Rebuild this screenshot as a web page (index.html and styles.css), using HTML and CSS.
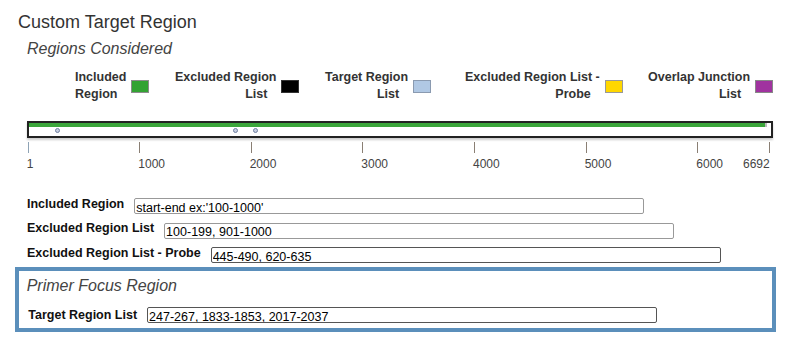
FILE: index.html
```html
<!DOCTYPE html>
<html lang="en">
<head>
<meta charset="UTF-8">
<title>Custom Target Region</title>
<link rel="stylesheet" href="styles.css">
</head>
<body>
<div class="page">
  <h1 class="title">Custom Target Region</h1>
  <div class="section">
    <h2 class="subtitle">Regions Considered</h2>
    <div class="legend">
      <div class="legend-item">
        <div class="legend-label">Included<br><span class="last">Region</span></div>
        <span class="swatch included"></span>
      </div>
      <div class="legend-item">
        <div class="legend-label">Excluded Region<br><span class="last">List</span></div>
        <span class="swatch excluded"></span>
      </div>
      <div class="legend-item">
        <div class="legend-label">Target Region<br><span class="last">List</span></div>
        <span class="swatch target"></span>
      </div>
      <div class="legend-item">
        <div class="legend-label">Excluded Region List -<br><span class="last">Probe</span></div>
        <span class="swatch probe"></span>
      </div>
      <div class="legend-item">
        <div class="legend-label">Overlap Junction<br><span class="last">List</span></div>
        <span class="swatch overlap"></span>
      </div>
    </div>

    <div class="track">
      <div class="track-fill"></div>
      <span class="marker" style="left: 26px"></span>
      <span class="marker" style="left: 204px"></span>
      <span class="marker" style="left: 224px"></span>
    </div>

    <div class="scale">
      <div class="tick first" style="left: 0.7px"><span class="tick-label">1</span></div>
      <div class="tick" style="left: 112.3px"><span class="tick-label">1000</span></div>
      <div class="tick" style="left: 223.7px"><span class="tick-label">2000</span></div>
      <div class="tick" style="left: 335.3px"><span class="tick-label">3000</span></div>
      <div class="tick" style="left: 447px"><span class="tick-label">4000</span></div>
      <div class="tick" style="left: 558.7px"><span class="tick-label">5000</span></div>
      <div class="tick" style="left: 670.3px"><span class="tick-label">6000</span></div>
      <div class="tick end" style="left: 741.7px"><span class="tick-label">6692</span></div>
    </div>

    <div class="fields">
      <div class="field">
        <label for="included">Included Region</label>
        <input id="included" type="text" value="start-end ex:'100-1000'">
      </div>
      <div class="field">
        <label for="excluded">Excluded Region List</label>
        <input id="excluded" type="text" value="100-199, 901-1000">
      </div>
      <div class="field">
        <label for="probe">Excluded Region List - Probe</label>
        <input id="probe" class="dark" type="text" value="445-490, 620-635">
      </div>
    </div>
  </div>

  <div class="focus-box">
    <h3 class="subtitle">Primer Focus Region</h3>
    <div class="field">
      <label for="targets">Target Region List</label>
      <input id="targets" class="dark" type="text" value="247-267, 1833-1853, 2017-2037">
    </div>
  </div>
</div>
</body>
</html>
```

FILE: styles.css
```css
body {
  margin: 0;
  background-color: #fff;
  font-family: "Liberation Sans", Arial, sans-serif;
  color: #333;
}

.page {
  padding: 12.2px 16px 0 15px;
}

.title {
  margin: 0 0 0 3px;
  font-size: 18px;
  font-weight: normal;
  line-height: 20px;
  color: #333;
}

.section {
  padding-left: 12px;
}

.subtitle {
  margin: 8.3px 0 0;
  font-size: 16px;
  font-style: italic;
  font-weight: normal;
  line-height: 18px;
  color: #444;
}

/* legend */
.legend {
  display: grid;
  grid-template-columns: 100px 150px 140px 183px auto;
  margin-top: 10.1px;
  padding-left: 48px;
}

.legend-item {
  display: flex;
  align-items: center;
}

.legend-label {
  font-size: 12.5px;
  font-weight: bold;
  line-height: 17.6px;
  text-align: right;
  color: #333;
}

.legend-label .last {
  padding-right: 9px;
}

.swatch {
  display: inline-block;
  box-sizing: border-box;
  width: 18px;
  height: 13px;
  margin-left: 5px;
  border: 1px solid #8c8c8c;
}

.included { background-color: #33a333; }
.excluded { background-color: #000; border-color: #333; }
.target { background-color: #b0c8e4; border-color: #8a9ab0; }
.probe { background-color: #ffd700; border-color: #999; }
.overlap { background-color: #a0339f; border-color: #888; }

/* region track */
.track {
  position: relative;
  box-sizing: border-box;
  width: 746px;
  height: 17px;
  margin-top: 17.2px;
  border: 2px solid #222;
  box-shadow: 0 2px 2px rgba(0, 0, 0, 0.2);
  background-color: #fff;
}

.track-fill {
  height: 4px;
  margin-right: 4px;
  background-color: #3aa53a;
  border-right: 2px solid #bbb;
}

.marker {
  position: absolute;
  top: 5.5px;
  box-sizing: border-box;
  width: 5px;
  height: 5px;
  border: 1px solid #6f7f9f;
  border-radius: 50%;
  background-color: #c5cde0;
}

/* scale */
.scale {
  position: relative;
  height: 30px;
  margin-top: 4px;
}

.tick {
  position: absolute;
  top: 0;
  width: 1px;
  height: 11px;
  background-color: #8a7f74;
}

.tick.first {
  background-color: #8ea3b5;
}

.tick-label {
  position: absolute;
  top: 15.5px;
  left: -1px;
  font-size: 12px;
  line-height: 14px;
  color: #444;
  white-space: nowrap;
}

.tick.end .tick-label {
  left: auto;
  right: 0;
}

/* form fields */
.fields {
  display: flex;
  flex-direction: column;
  gap: 6.2px;
  margin-top: 24px;
}

.field {
  display: flex;
  align-items: flex-start;
}

.field label {
  font-size: 12.5px;
  font-weight: bold;
  line-height: 16px;
  color: #111;
}

.field input {
  box-sizing: border-box;
  width: 510px;
  height: 16px;
  margin: 2.3px 0 0 10px;
  padding: 3px 2px 0 1px;
  border: 1px solid #999;
  border-radius: 2px;
  font-family: "Liberation Sans", Arial, sans-serif;
  font-size: 12.5px;
  color: #000;
  background-color: #fff;
  outline: none;
}

.field input.dark {
  border-color: #555;
}

/* primer focus box */
.focus-box {
  margin-top: 4px;
  padding: 5.9px 0 5px 7.7px;
  border: 4px solid #5b8fbb;
}

.focus-box .subtitle {
  margin: 0;
}

.focus-box .field {
  margin-top: 9.8px;
  padding-left: 1.6px;
}

.focus-box .field label {
  margin-top: 2.5px;
}
```
